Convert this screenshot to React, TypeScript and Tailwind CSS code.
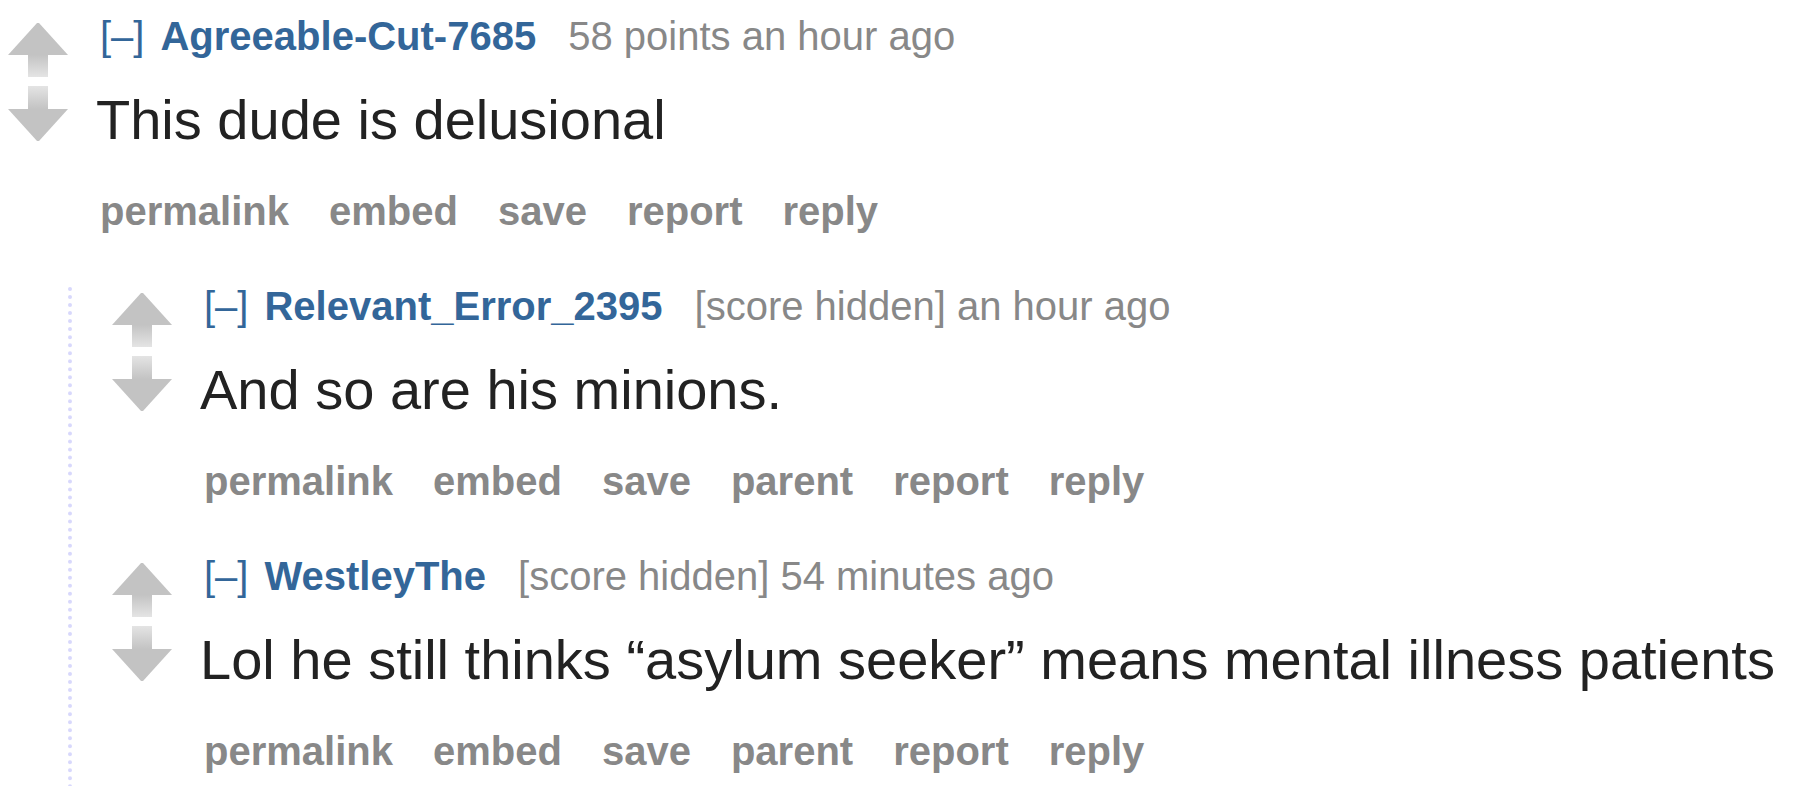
import { useId } from 'react';

type CommentProps = {
  author: string;
  score: string;
  body: string;
  buttons: string[];
};

function Arrows() {
  const id = useId();
  const up = `${id}-up`;
  const down = `${id}-down`;

  return (
    <div className="ml-[8px] mt-[5px] flex w-[60px] shrink-0 flex-col gap-[8px]">
      <svg width="60" height="56" viewBox="0 0 60 56" className="blur-[0.6px]">
        <defs>
          <linearGradient id={up} x1="0" y1="0" x2="0" y2="1">
            <stop offset="0" stopColor="#c3c3c3" />
            <stop offset="1" stopColor="#e4e4e4" />
          </linearGradient>
        </defs>
        <polygon points="29,1 31,1 60,33 0,33" fill="#c3c3c3" />
        <rect x="20" y="33" width="20" height="22" fill={`url(#${up})`} />
      </svg>
      <svg width="60" height="56" viewBox="0 0 60 56" className="blur-[0.6px]">
        <defs>
          <linearGradient id={down} x1="0" y1="0" x2="0" y2="1">
            <stop offset="0" stopColor="#e4e4e4" />
            <stop offset="1" stopColor="#c3c3c3" />
          </linearGradient>
        </defs>
        <rect x="20" y="0" width="20" height="23" fill={`url(#${down})`} />
        <polygon points="0,23 60,23 31,55 29,55" fill="#c3c3c3" />
      </svg>
    </div>
  );
}

function Comment({ author, score, body, buttons }: CommentProps) {
  return (
    <div className="flex items-start">
      <Arrows />
      <div className="ml-[32px] flex flex-col whitespace-nowrap">
        <div className="-mt-[5px] h-[48px] text-[40px] leading-[48px]">
          <span className="mr-[16px] text-[#336699]">[–]</span>
          <span className="mr-[32px] font-bold text-[#336699]">{author}</span>
          <span className="text-[#888888]">{score}</span>
        </div>
        <p className="-ml-[4px] mt-[28px] text-[56px] leading-[64px] text-[#222222]">
          {body}
        </p>
        <ul className="mt-[35px] flex gap-[40px] text-[40px] font-bold leading-[48px] text-[#888888]">
          {buttons.map((b) => (
            <li key={b}>{b}</li>
          ))}
        </ul>
      </div>
    </div>
  );
}

export default function App() {
  return (
    <div className="min-h-screen overflow-hidden bg-white pt-[17px] font-['Liberation_Sans',Arial,sans-serif]">
      <Comment
        author="Agreeable-Cut-7685"
        score="58 points an hour ago"
        body="This dude is delusional"
        buttons={['permalink', 'embed', 'save', 'report', 'reply']}
      />
      <div className="ml-[68px] mt-[52px] flex flex-col gap-[52px] border-l-4 border-dotted border-[#d8d8fc] pb-[30px] pl-[32px]">
        <Comment
          author="Relevant_Error_2395"
          score="[score hidden] an hour ago"
          body="And so are his minions."
          buttons={['permalink', 'embed', 'save', 'parent', 'report', 'reply']}
        />
        <Comment
          author="WestleyThe"
          score="[score hidden] 54 minutes ago"
          body="Lol he still thinks “asylum seeker” means mental illness patients"
          buttons={['permalink', 'embed', 'save', 'parent', 'report', 'reply']}
        />
      </div>
    </div>
  );
}
